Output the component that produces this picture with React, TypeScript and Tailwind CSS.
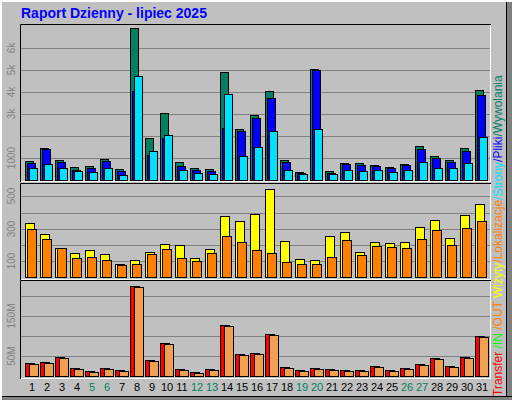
const hits = [
  [161, 163, 168], [148, 149, 164], [160, 162, 168], [167, 170, 171], [166, 168, 172],
  [159, 161, 168], [169, 171, 175], [28, 91, 76], [138, 155, 151], [113, 138, 135],
  [162, 166, 170], [168, 170, 173], [169, 171, 174], [72, 128, 94], [129, 131, 156],
  [115, 118, 147], [91, 98, 131], [160, 162, 170], [172, 173, 174], [69, 70, 129],
  [171, 173, 174], [163, 164, 170], [163, 165, 171], [165, 166, 170], [167, 168, 172],
  [164, 165, 170], [146, 149, 162], [156, 158, 168], [160, 162, 168], [148, 151, 163],
  [90, 95, 137],
];
const visits = [
  [223, 229], [234, 239], [248, 248], [253, 258], [250, 257], [254, 260], [264, 265],
  [260, 264], [252, 254], [244, 249], [245, 258], [258, 261], [249, 253], [216, 236],
  [221, 242], [214, 250], [189, 253], [241, 262], [259, 264], [260, 264], [236, 257],
  [232, 240], [252, 255], [242, 246], [243, 247], [242, 248], [227, 239], [220, 230],
  [238, 245], [215, 228], [204, 221],
];
const transfer = [
  363, 362, 357, 368, 371, 368, 370, 286, 360, 343, 369, 372, 369, 325, 354, 353, 334,
  367, 370, 368, 369, 370, 370, 366, 370, 368, 364, 358, 366, 357, 336,
];
const weekend = [5, 6, 12, 13, 19, 20, 26, 27];

function Panel({ y1, y2, grid }: { y1: number; y2: number; grid: number[] }) {
  return (
    <g>
      <rect x={20} y={y1} width={471} height={y2 - y1} fill="#c0c0c0" />
      {grid.map((g) => (
        <line key={g} x1={21} x2={490} y1={g + 0.5} y2={g + 0.5} stroke="#808080" />
      ))}
      <polyline points={`20.5,${y2} 20.5,${y1 + 0.5} 491,${y1 + 0.5}`} fill="none" stroke="#000" />
      <polyline points={`21,${y2 - 0.5} 490.5,${y2 - 0.5} 490.5,${y1 + 1}`} fill="none" stroke="#fff" />
    </g>
  );
}

function Bar({ x, top, bottom, w, fill }: { x: number; top: number; bottom: number; w: number; fill: string }) {
  return <rect x={x + 0.5} y={top + 0.5} width={w} height={Math.max(bottom - top - 1, 1)} fill={fill} stroke="#000" />;
}

function Label({ x, y, t }: { x: number; y: number; t: string }) {
  return (
    <text x={x} y={y} transform={`rotate(-90 ${x} ${y})`} fontSize={10} fill="#808080" textAnchor="middle" fontFamily="'Liberation Sans', Arial, sans-serif">
      {t}
    </text>
  );
}

export default function App() {
  return (
    <div className="w-[512px] h-[400px] bg-[#c0c0c0] border-l-2 border-t-2 border-white relative overflow-hidden" style={{ fontFamily: "'Liberation Sans', Arial, sans-serif" }}>
      <div className="absolute right-0 top-0 bottom-0 w-[6px] bg-[#808080] border-l border-black" />
      <div className="absolute left-0 right-0 bottom-0 h-[4px] bg-[#808080] border-t border-black" />
      <svg width={512} height={400} className="absolute -left-[2px] -top-[2px]">
        <text x={21} y={18} fontSize={14} fontWeight="bold" fill="#0000ff">Raport Dzienny -  lipiec 2025</text>
        <Panel y1={24} y2={182} grid={[48, 70, 92, 114, 136, 158]} />
        <Panel y1={183} y2={280} grid={[196, 213, 229, 245, 261]} />
        <Panel y1={280} y2={379} grid={[296, 316, 336, 356]} />
        <Label x={15} y={158} t="1000" />
        <Label x={15} y={114} t="3k" />
        <Label x={15} y={92} t="4k" />
        <Label x={15} y={70} t="5k" />
        <Label x={15} y={48} t="6k" />
        <Label x={15} y={261} t="100" />
        <Label x={15} y={229} t="300" />
        <Label x={15} y={196} t="500" />
        <Label x={15} y={356} t="50M" />
        <Label x={15} y={316} t="150M" />
        {hits.map((h, i) => {
          const c = 32 + i * 15;
          return (
            <g key={"h" + i}>
              <Bar x={c - 7} top={h[0]} bottom={181} w={8} fill="#008060" />
              <Bar x={c - 5} top={h[1]} bottom={181} w={8} fill="#0000ff" />
              <Bar x={c - 3} top={h[2]} bottom={181} w={8} fill="#00e0ff" />
            </g>
          );
        })}
        {visits.map((v, i) => {
          const c = 32 + i * 15;
          return (
            <g key={"v" + i}>
              <Bar x={c - 7} top={v[0]} bottom={278} w={9} fill="#ffff00" />
              <Bar x={c - 5} top={v[1]} bottom={278} w={9} fill="#ff8000" />
            </g>
          );
        })}
        {transfer.map((t, i) => {
          const c = 32 + i * 15;
          return (
            <g key={"t" + i}>
              <Bar x={c - 7} top={t} bottom={377} w={9} fill="#ff0000" />
              <Bar x={c - 3} top={t + 1} bottom={377} w={9} fill="#f0a050" />
            </g>
          );
        })}
        {hits.map((_, i) => (
          <text key={"d" + i} x={32 + i * 15} y={391} fontSize={11} textAnchor="middle" fill={weekend.includes(i + 1) ? "#00805c" : "#000"}>
            {i + 1}
          </text>
        ))}
        <text x={502} y={396} transform="rotate(-90 502 396)" fontSize={12}>
          <tspan fill="#ff0000">Transfer</tspan>
          <tspan fill="#00ff00"> /IN</tspan>
          <tspan fill="#ff8000"> /OUT</tspan>
          <tspan fill="#ffff00">  Wizyty</tspan>
          <tspan fill="#ff8000">/Lokalizacje</tspan>
          <tspan fill="#00e0ff">/Strony</tspan>
          <tspan fill="#0000ff">/Pliki</tspan>
          <tspan fill="#008060">/Wywolania</tspan>
        </text>
      </svg>
    </div>
  );
}
